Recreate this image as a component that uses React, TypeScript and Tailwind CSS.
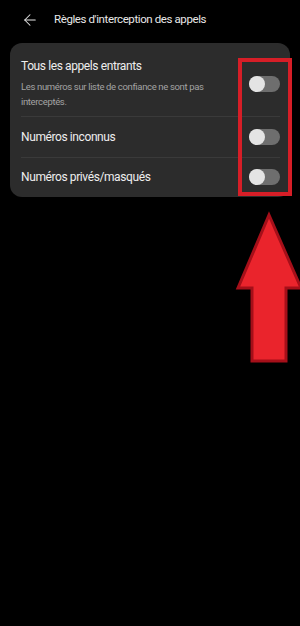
import { ArrowLeft } from "lucide-react";

const font = { fontFamily: "Roboto, 'Noto Sans', sans-serif" };

function Toggle() {
  return (
    <div className="relative h-4 w-[31px] shrink-0 rounded-full bg-[#6e6e6e]">
      <div className="absolute left-0 top-0 h-4 w-4 rounded-full bg-[#e4e4e4]" />
    </div>
  );
}

export default function App() {
  return (
    <div className="relative h-[626px] w-[300px] overflow-hidden bg-black text-[#eeeeee]" style={font}>
      <header className="flex h-[43px] items-center gap-[15px] pl-[21px] pb-[4px]">
        <ArrowLeft size={18} strokeWidth={1.4} className="text-[#e8e8e8]" />
        <h1 className="text-[11.5px] tracking-[-0.4px] text-[#e8e8e8]">Règles d'interception des appels</h1>
      </header>

      <section className="mx-[10px] rounded-[12px] bg-[#2c2c2c] px-[11px] pr-[10px]">
        <div className="flex items-center border-b border-[#3a3a3a] pt-[15px] pb-[7px]">
          <div className="flex-1">
            <p className="text-[12px] leading-4 tracking-[-0.4px]">Tous les appels entrants</p>
            <p className="mt-[5px] pr-[40px] text-[9.5px] leading-[15px] tracking-[-0.35px] text-[#a3a3a3]">
              Les numéros sur liste de confiance ne sont pas interceptés.
            </p>
          </div>
          <Toggle />
        </div>
        <div className="flex h-[41px] items-center border-b border-[#3a3a3a]">
          <p className="flex-1 text-[12px] tracking-[-0.4px]">Numéros inconnus</p>
          <Toggle />
        </div>
        <div className="flex h-[39px] items-center pb-[2px]">
          <p className="flex-1 text-[12px] tracking-[-0.4px]">Numéros privés/masqués</p>
          <Toggle />
        </div>
      </section>

      {/* annotation overlay */}
      <div className="absolute left-[238px] top-[58px] h-[138px] w-[54px] border-[4px] border-[#d61e27]" />
      <svg className="absolute left-0 top-0" width="300" height="626" viewBox="0 0 300 626">
        <polygon
          points="269,215 301,288 286,288 286,361 252,361 252,288 238,288"
          fill="#ea242c"
          stroke="#a50f19"
          strokeWidth="3"
          strokeLinejoin="miter"
        />
      </svg>
    </div>
  );
}
